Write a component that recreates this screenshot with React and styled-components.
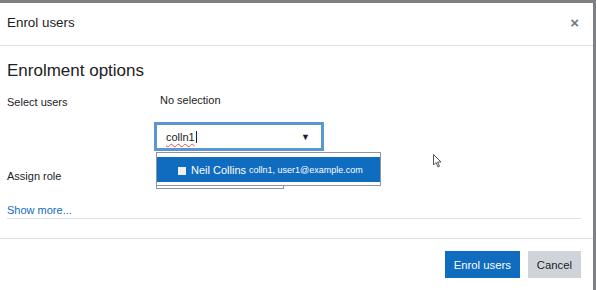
import React from 'react';
import styled, { createGlobalStyle } from 'styled-components';

const GlobalStyle = createGlobalStyle`
  html, body {
    margin: 0;
    padding: 0;
    background: #7d7f82;
    font-family: "Liberation Sans", Arial, sans-serif;
    color: #1d2125;
  }
`;

const Backdrop = styled.div`
  width: 596px;
  height: 290px;
  padding: 3px 3px 0 0;
  box-sizing: border-box;
  overflow: hidden;
`;

const Modal = styled.div`
  position: relative;
  height: 287px;
  background: #fff;
  display: flex;
  flex-direction: column;
`;

const Header = styled.div`
  height: 43px;
  box-sizing: border-box;
  padding: 0 14px 3px 7px;
  display: flex;
  align-items: center;
  justify-content: space-between;
  border-bottom: 1px solid #dee2e6;
`;

const Title = styled.div`
  font-size: 13.4px;
`;

const Close = styled.span`
  font-size: 15px;
  font-weight: bold;
  color: #75797e;
  line-height: 1;
`;

const Body = styled.div`
  flex: 1;
  padding: 0 12px 0 7px;
`;

const Heading = styled.h4`
  margin: 15px 0 0;
  font-size: 17px;
  font-weight: normal;
  line-height: 20px;
`;

const Row = styled.div`
  display: flex;
  align-items: ${p => (p.$center ? 'center' : 'flex-start')};
  margin-top: ${p => p.$top}px;
`;

const Label = styled.div`
  width: 147px;
  flex: none;
  font-size: 11px;
  line-height: 16px;
  padding-top: ${p => p.$pad || 0}px;
`;

const Controls = styled.div`
  display: flex;
  flex-direction: column;
`;

const NoSelection = styled.span`
  font-size: 11px;
  line-height: 16px;
  padding-left: 6px;
`;

const Control = styled.div`
  position: relative;
  margin-top: 14px;
`;

const Search = styled.div`
  width: 170px;
  height: 29px;
  box-sizing: border-box;
  border: 3px solid #5b97d3;
  display: flex;
  align-items: center;
  justify-content: space-between;
  padding: 1px 11px 0 9px;
  font-size: 11px;
`;

const Typed = styled.span`
  text-decoration: underline wavy #e05050;
  text-decoration-thickness: 1px;
  text-underline-offset: 2px;
  border-right: 1px solid #1d2125;
  padding-right: 1px;
`;

const Arrow = styled.span`
  font-size: 9px;
  color: #1d2125;
`;

const Suggestions = styled.ul`
  position: absolute;
  top: 30px;
  left: 2px;
  width: 225px;
  height: 34px;
  box-sizing: border-box;
  margin: 0;
  padding: 4px 0 0;
  list-style: none;
  background: #fff;
  border: 1px solid #8f959e;
  z-index: 2;
`;

const Option = styled.li`
  height: 25px;
  background: ${p => (p.$active ? '#0f6cbf' : '#fff')};
  color: ${p => (p.$active ? '#fff' : '#1d2125')};
  display: flex;
  align-items: center;
  padding-left: 21px;
  font-size: 11px;
`;

const Check = styled.span`
  width: 8px;
  height: 8px;
  background: #eef1f4;
  margin: 2px 5px 0 0;
`;

const Meta = styled.span`
  font-size: 9px;
  margin-left: 3px;
  padding-top: 1px;
`;

const RoleSelect = styled.div`
  width: 128px;
  height: 26px;
  margin-left: 2px;
  box-sizing: border-box;
  border: 1px solid #8f959e;
`;

const Link = styled.a`
  display: block;
  margin-top: 13px;
  font-size: 11px;
  line-height: 16px;
  color: #0f6cbf;
  text-decoration: none;
`;

const Divider = styled.hr`
  margin: 0;
  border: 0;
  border-top: 1px solid #dee2e6;
`;

const Footer = styled.div`
  height: 52px;
  box-sizing: border-box;
  border-top: 1px solid #dee2e6;
  padding: 12px 12px 0;
  display: flex;
  justify-content: flex-end;
  align-items: flex-start;
  gap: 8px;
`;

const Button = styled.button`
  height: 27px;
  padding: 0 9px;
  border: 0;
  border-radius: 0;
  font-family: inherit;
  font-size: 11.3px;
  background: ${p => (p.$primary ? '#0f6cbf' : '#ced4da')};
  color: ${p => (p.$primary ? '#fff' : '#1d2125')};
`;

const Pointer = styled.svg`
  position: absolute;
  left: 433px;
  top: 151px;
`;

export default function App() {
  return (
    <Backdrop>
      <GlobalStyle />
      <Modal>
        <Header>
          <Title>Enrol users</Title>
          <Close>×</Close>
        </Header>
        <Body>
          <Heading>Enrolment options</Heading>
          <Row $top={11}>
            <Label $pad={2}>Select users</Label>
            <Controls>
              <NoSelection>No selection</NoSelection>
              <Control>
                <Search>
                  <Typed>colln1</Typed>
                  <Arrow>▼</Arrow>
                </Search>
                <Suggestions>
                  <Option $active>
                    <Check />
                    Neil Collins
                    <Meta>colln1, user1@example.com</Meta>
                  </Option>
                </Suggestions>
              </Control>
            </Controls>
          </Row>
          <Row $top={12} $center>
            <Label>Assign role</Label>
            <RoleSelect />
          </Row>
          <Link href="#">Show more...</Link>
          <Divider />
        </Body>
        <Footer>
          <Button $primary>Enrol users</Button>
          <Button>Cancel</Button>
        </Footer>
        <Pointer width="9" height="14" viewBox="0 0 9 14">
          <path d="M0.5 0.5 L0.5 11 L3 8.5 L5 13 L6.5 12.3 L4.6 8 L8 8 Z" fill="#fff" stroke="#555" strokeWidth="1" />
        </Pointer>
      </Modal>
    </Backdrop>
  );
}
